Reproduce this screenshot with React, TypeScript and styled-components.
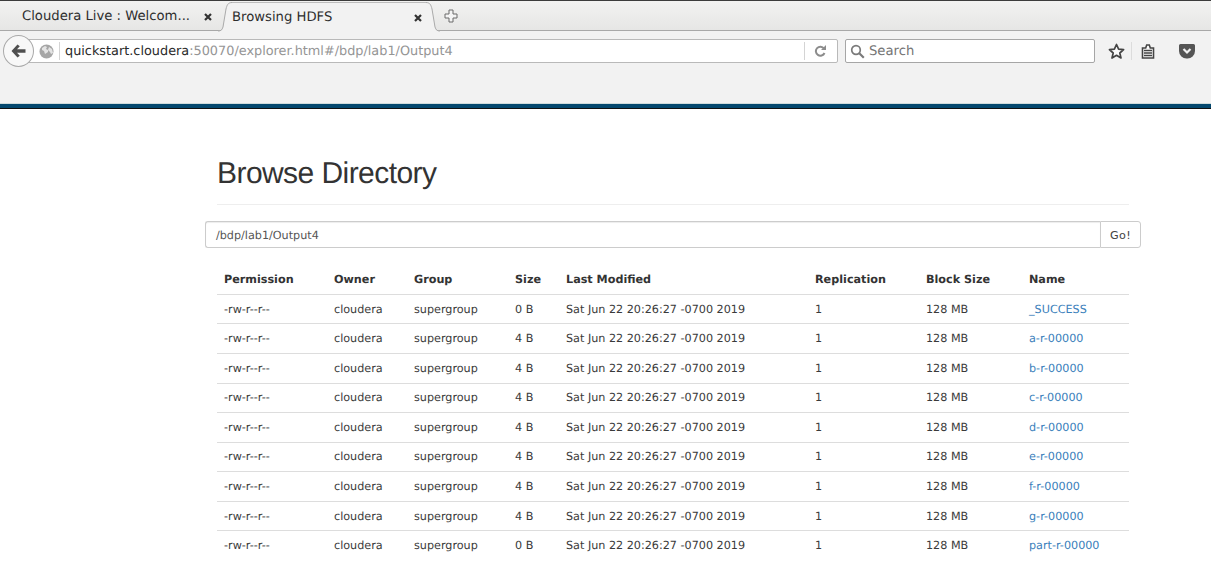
import React from "react";
import styled, { createGlobalStyle } from "styled-components";

const Global = createGlobalStyle`
  html, body { margin: 0; padding: 0; background: #fff; overflow: hidden; }
  body { font-family: "DejaVu Sans", sans-serif; text-rendering: geometricPrecision; }
`;
const Page = styled.div`width: 1211px; height: 580px; overflow: hidden; display: flex; flex-direction: column;`;
const TabStrip = styled.div`
  height: 31px; box-sizing: border-box; flex: none; display: flex; align-items: stretch;
  border-top: 1px solid #3c3c3c; border-bottom: 1px solid #a8a8a8;
  background: linear-gradient(#f2f2f1, #e6e6e5); position: relative; z-index: 1;
`;
const Tab = styled.div<{ $active?: boolean }>`
  box-sizing: border-box; display: flex; align-items: center; justify-content: space-between;
  font-size: 13.2px; color: #2e2e2e; white-space: nowrap;
  width: ${(p) => (p.$active ? "194px" : "196px")};
  margin-left: ${(p) => (p.$active ? "0" : "22px")};
  padding-right: ${(p) => (p.$active ? "3px" : "5px")};
  padding-top: ${(p) => (p.$active ? "0" : "2px")};
  ${(p) => p.$active && `
    background: #f2f2f2; height: 30px; margin-top: 1px; margin-bottom: -1px; border-top: 1px solid #bdbdbd;
  `}
`;
const Curve = styled.svg`flex: none; display: block; margin-top: 1px; margin-bottom: -1px;`;
const CloseMark = styled.svg`flex: none; display: block;`;
const PlusBox = styled.div`margin-left: 4px; align-self: center; display: flex;`;
const NavBar = styled.div`
  height: 73px; flex: none; box-sizing: border-box; background: #f2f2f2; padding: 8px 0 0 0;
  border-bottom: 1px solid #cfdcdc;
`;
const NavRow = styled.div`display: flex; align-items: center; height: 24px; position: relative;`;
const BackCircle = styled.div`
  position: absolute; left: 3px; top: -4px; width: 31px; height: 32px; box-sizing: border-box;
  border-radius: 50%; background: #f8f8f8; border: 1px solid #a9a9a9; display: flex; align-items: center; justify-content: center; z-index: 1;
  padding-right: 2px;
`;
const UrlBar = styled.div`
  margin-left: 20px; width: 818px; height: 24px; box-sizing: border-box; background: #fff;
  border: 1px solid #b9b9b9; border-radius: 2px; display: flex; align-items: center; padding-left: 16px;
`;
const Divider = styled.div`width: 1px; height: 18px; background: #d4d4d4; flex: none;`;
const UrlText = styled.div`margin-left: 5px; font-size: 12.85px; color: #959595; white-space: nowrap; flex: 1;`;
const Host = styled.span`color: #2a2a2a;`;
const Reload = styled.div`width: 32px; box-sizing: border-box; padding-right: 2px; display: flex; justify-content: center; flex: none;`;
const SearchBox = styled.div`
  margin-left: 7px; width: 250px; height: 24px; box-sizing: border-box; background: #fff;
  border: 1px solid #a6a6a6; border-radius: 2px; display: flex; align-items: center; padding-left: 4px; gap: 4px;
  font-size: 13.2px; color: #757575;
`;
const ToolIcons = styled.div`display: flex; align-items: center; margin-left: 13px;`;
const ToolSep = styled.div`width: 1px; height: 18px; background: #dcdcdc; margin: 0 8px 0 6px;`;
const Stripe = styled.div`
  height: 5px; flex: none; background: linear-gradient(#04486e 0, #04486e 4px, #111 4px);
`;
const Content = styled.main`padding: 0 0 0 205px; width: 936px; box-sizing: content-box;`;
const HeadingBlock = styled.div`
  margin: 40px 12px 16px; height: 56px; box-sizing: border-box; border-bottom: 1px solid #eee;
`;
const Title = styled.h1`
  margin: 0; font-family: "Liberation Sans", sans-serif; font-weight: 400; font-size: 30px; line-height: 49px; color: #333;
  letter-spacing: -0.56px;
`;
const SearchGroup = styled.div`display: flex; height: 27px; margin-bottom: 16px;`;
const PathInput = styled.div`
  flex: 1; box-sizing: border-box; border: 1px solid #ccc; border-right: 0; border-radius: 3px 0 0 3px;
  font-size: 11.2px; color: #555; padding-left: 10px; line-height: 28px; box-shadow: inset 0 1px 1px rgba(0,0,0,.075);
`;
const GoButton = styled.button`
  width: 41px; box-sizing: border-box; border: 1px solid #ccc; border-radius: 0 3px 3px 0; background: #fff;
  font-family: "DejaVu Sans", sans-serif; font-size: 11.2px; color: #444; padding: 2px 0 0; letter-spacing: .4px;
`;
const Table = styled.table`
  margin: 0 12px; width: 912px; border-collapse: collapse; table-layout: fixed; font-size: 11.2px; color: #3a3a3a;
`;
const Th = styled.th<{ $w: number }>`
  width: ${(p) => p.$w}px; text-align: left; font-weight: 700; padding: 1px 0 0 7px; height: 30.4px; box-sizing: border-box;
  border-bottom: 1px solid #ddd; white-space: nowrap; color: #333;
`;
const Tr = styled.tr`height: 29.57px;`;
const Td = styled.td`padding: 0 0 0 7px; border-top: 1px solid #ddd; white-space: nowrap;`;
const FileLink = styled.a`color: #3a80bb; text-decoration: none;`;

const cols: [string, number][] = [
  ["Permission", 110], ["Owner", 80], ["Group", 101], ["Size", 51],
  ["Last Modified", 249], ["Replication", 111], ["Block Size", 103], ["Name", 107],
];
const files: [string, string][] = [
  ["0 B", "_SUCCESS"], ["4 B", "a-r-00000"], ["4 B", "b-r-00000"], ["4 B", "c-r-00000"], ["4 B", "d-r-00000"],
  ["4 B", "e-r-00000"], ["4 B", "f-r-00000"], ["4 B", "g-r-00000"], ["0 B", "part-r-00000"],
];

const Close = () => (
  <CloseMark width="10" height="10" viewBox="0 0 10 10">
    <path d="M2 2l6 6M8 2l-6 6" stroke="#333" strokeWidth="2.2" />
  </CloseMark>
);

export default function App() {
  return (
    <Page>
      <Global />
      <TabStrip>
        <Tab>
          Cloudera Live : Welcom...
          <Close />
        </Tab>
        <Curve width="14" height="30" viewBox="0 0 14 30">
          <path d="M0 29c3 0 4-1 5-4l3-18c1-4 2-6.500 6-6.500V30H0z" fill="#f2f2f2" />
          <path d="M0 29c3 0 4-1 5-4l3-18c1-4 2-6.500 6-6.500" fill="none" stroke="#aaa" />
        </Curve>
        <Tab $active>
          Browsing HDFS
          <Close />
        </Tab>
        <Curve width="14" height="30" viewBox="0 0 14 30">
          <path d="M14 29c-3 0-4-1-5-4L6 7C5 3 4 .5 0 .5V30h14z" fill="#f2f2f2" />
          <path d="M14 29c-3 0-4-1-5-4L6 7C5 3 4 .5 0 .5" fill="none" stroke="#aaa" />
        </Curve>
        <PlusBox>
          <svg width="14" height="14" viewBox="0 0 14 14">
            <path d="M5 1h4v4h4v4H9v4H5V9H1V5h4z" fill="#f4f4f4" stroke="#6b6b6b" />
          </svg>
        </PlusBox>
      </TabStrip>
      <NavBar>
        <NavRow>
          <BackCircle>
            <svg width="16" height="14" viewBox="0 0 16 14">
              <path d="M7.500 .5L1.500 7l6 6.500 2.300-1.700L7 8.700h8.500V5.300H7l2.800-3.100z" fill="#4f4f4f" />
            </svg>
          </BackCircle>
          <UrlBar>
            <svg width="15" height="15" viewBox="0 0 15 15" style={{ flex: "none", marginLeft: 2, marginRight: 5 }}>
              <circle cx="7.500" cy="7.500" r="7" fill="#a6a6a6" />
              <path d="M3 4l3-2 2 1-1 2 2 1 0 2-3 2-1-3-2-1zM10 3l3 2 1 4-2 1-1-2-2-2z" fill="#e4e4e4" />
            </svg>
            <Divider />
            <UrlText><Host>quickstart.cloudera</Host>:50070/explorer.html#/bdp/lab1/Output4</UrlText>
            <Divider />
            <Reload>
              <svg width="12" height="12" viewBox="0 0 12 12">
                <path d="M10 3.500A4.500 4.500 0 1 0 10.500 8" fill="none" stroke="#8c8c8c" strokeWidth="2" />
                <path d="M7 5h5V0z" fill="#8c8c8c" />
              </svg>
            </Reload>
          </UrlBar>
          <SearchBox>
            <svg width="15" height="15" viewBox="0 0 15 15">
              <circle cx="6" cy="6" r="4.300" fill="none" stroke="#7a7a7a" strokeWidth="1.700" />
              <path d="M9.300 9.300l4.500 4.500" stroke="#7a7a7a" strokeWidth="2.200" />
            </svg>
            Search
          </SearchBox>
          <ToolIcons>
            <svg width="17" height="17" viewBox="0 0 17 17">
              <path d="M8.500 1.500l2.100 4.700 5 .5-3.800 3.300 1.200 5-4.500-2.700L4 15l1.200-5L1.400 6.700l5-.5z" fill="#fbfbfb" stroke="#444" strokeWidth="1.700" strokeLinejoin="round" />
            </svg>
            <ToolSep />
            <svg width="14" height="15" viewBox="0 0 14 15" style={{ marginLeft: 1 }}>
              <path d="M1.500 4h3.200l1-3h2.600l1 3h3.200v10h-11z" fill="#fbfbfb" stroke="#444" strokeWidth="1.600" />
              <path d="M3 6.500h8M3 9h8M3 11.500h8" stroke="#444" strokeWidth="1.300" />
            </svg>
            <svg width="16" height="15" viewBox="0 0 16 15" style={{ marginLeft: 24 }}>
              <path d="M1.500 0h13A1.500 1.500 0 0 1 16 1.500V7a7.500 7.500 0 0 1-8 7.500A7.500 7.500 0 0 1 0 7V1.500A1.500 1.500 0 0 1 1.500 0z" fill="#555" />
              <path d="M4.500 5L8 8.500 11.500 5" fill="none" stroke="#f2f2f2" strokeWidth="2.200" />
            </svg>
          </ToolIcons>
        </NavRow>
      </NavBar>
      <Stripe />
      <Content>
        <HeadingBlock>
          <Title>Browse Directory</Title>
        </HeadingBlock>
        <SearchGroup>
          <PathInput>/bdp/lab1/Output4</PathInput>
          <GoButton>Go!</GoButton>
        </SearchGroup>
        <Table>
          <thead>
            <tr>
              {cols.map(([label, w]) => <Th key={label} $w={w}>{label}</Th>)}
            </tr>
          </thead>
          <tbody>
            {files.map(([size, name]) => (
              <Tr key={name}>
                <Td>-rw-r--r--</Td>
                <Td>cloudera</Td>
                <Td>supergroup</Td>
                <Td>{size}</Td>
                <Td>Sat Jun 22 20:26:27 -0700 2019</Td>
                <Td>1</Td>
                <Td>128 MB</Td>
                <Td><FileLink href="#">{name}</FileLink></Td>
              </Tr>
            ))}
          </tbody>
        </Table>
      </Content>
    </Page>
  );
}
